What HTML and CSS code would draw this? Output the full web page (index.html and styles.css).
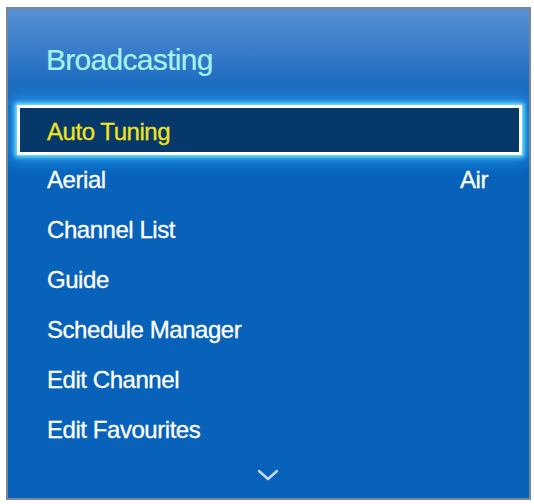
FILE: index.html
```html
<!DOCTYPE html>
<html>
<head>
<meta charset="utf-8">
<link rel="stylesheet" href="styles.css">
</head>
<body>
<div class="panel">
  <div class="header"><h1 class="title">Broadcasting</h1></div>
  <ul class="menu">
    <li class="item selected"><span>Auto Tuning</span></li>
    <li class="item"><span>Aerial</span><span class="value">Air</span></li>
    <li class="item"><span>Channel List</span></li>
    <li class="item"><span>Guide</span></li>
    <li class="item"><span>Schedule Manager</span></li>
    <li class="item"><span>Edit Channel</span></li>
    <li class="item"><span>Edit Favourites</span></li>
  </ul>
  <div class="more">
    <svg width="22" height="12" viewBox="0 0 22 12"><path d="M2 2 L11 10 L20 2" fill="none" stroke="#c9d8ec" stroke-width="2.4" stroke-linecap="round" stroke-linejoin="round"/></svg>
  </div>
</div>
</body>
</html>
```
FILE: styles.css
```css
html, body {
  margin: 0;
  padding: 0;
  background: #ffffff;
}
.panel {
  box-sizing: border-box;
  width: 525px;
  height: 493px;
  margin: 7px 0 0 6px;
  border: 2px solid #7b8795;
  background: #0862ba;
  font-family: "Liberation Sans", Arial, sans-serif;
  display: flex;
  flex-direction: column;
  overflow: hidden;
}
.header {
  height: 96px;
  box-sizing: border-box;
  padding: 36px 0 0 38px;
  background: linear-gradient(to bottom, #5791d2 0%, #3d80cb 35%, #206dc2 75%, #1666bf 100%);
}
.title {
  margin: 0;
  font-weight: normal;
  font-size: 30px;
  line-height: 30px;
  letter-spacing: -0.7px;
  color: #a6f2ee;
  -webkit-text-stroke: 0.2px #a6f2ee;
}
.menu {
  list-style: none;
  margin: 0;
  padding: 0;
}
.item {
  height: 50px;
  box-sizing: border-box;
  padding: 0 41px 0 39px;
  display: flex;
  justify-content: space-between;
  align-items: center;
  font-size: 24px;
  line-height: 50px;
  letter-spacing: -0.45px;
  color: #ffffff;
  -webkit-text-stroke: 0.3px #ffffff;
}
.item.selected {
  margin: 0 7px 0 9px;
  padding: 3px 0 0 27px;
  border: 3px solid #ffffff;
  background: #06386a;
  color: #f4e31e;
  -webkit-text-stroke: 0.3px #f4e31e;
  line-height: 40px;
  box-shadow: 0 0 4px 2px rgba(130, 235, 255, 0.95), 0 0 14px 6px rgba(40, 175, 255, 0.75);
  position: relative;
}
.more {
  flex: 1;
  display: flex;
  justify-content: center;
  padding-top: 14px;
  padding-right: 2px;
}
```
